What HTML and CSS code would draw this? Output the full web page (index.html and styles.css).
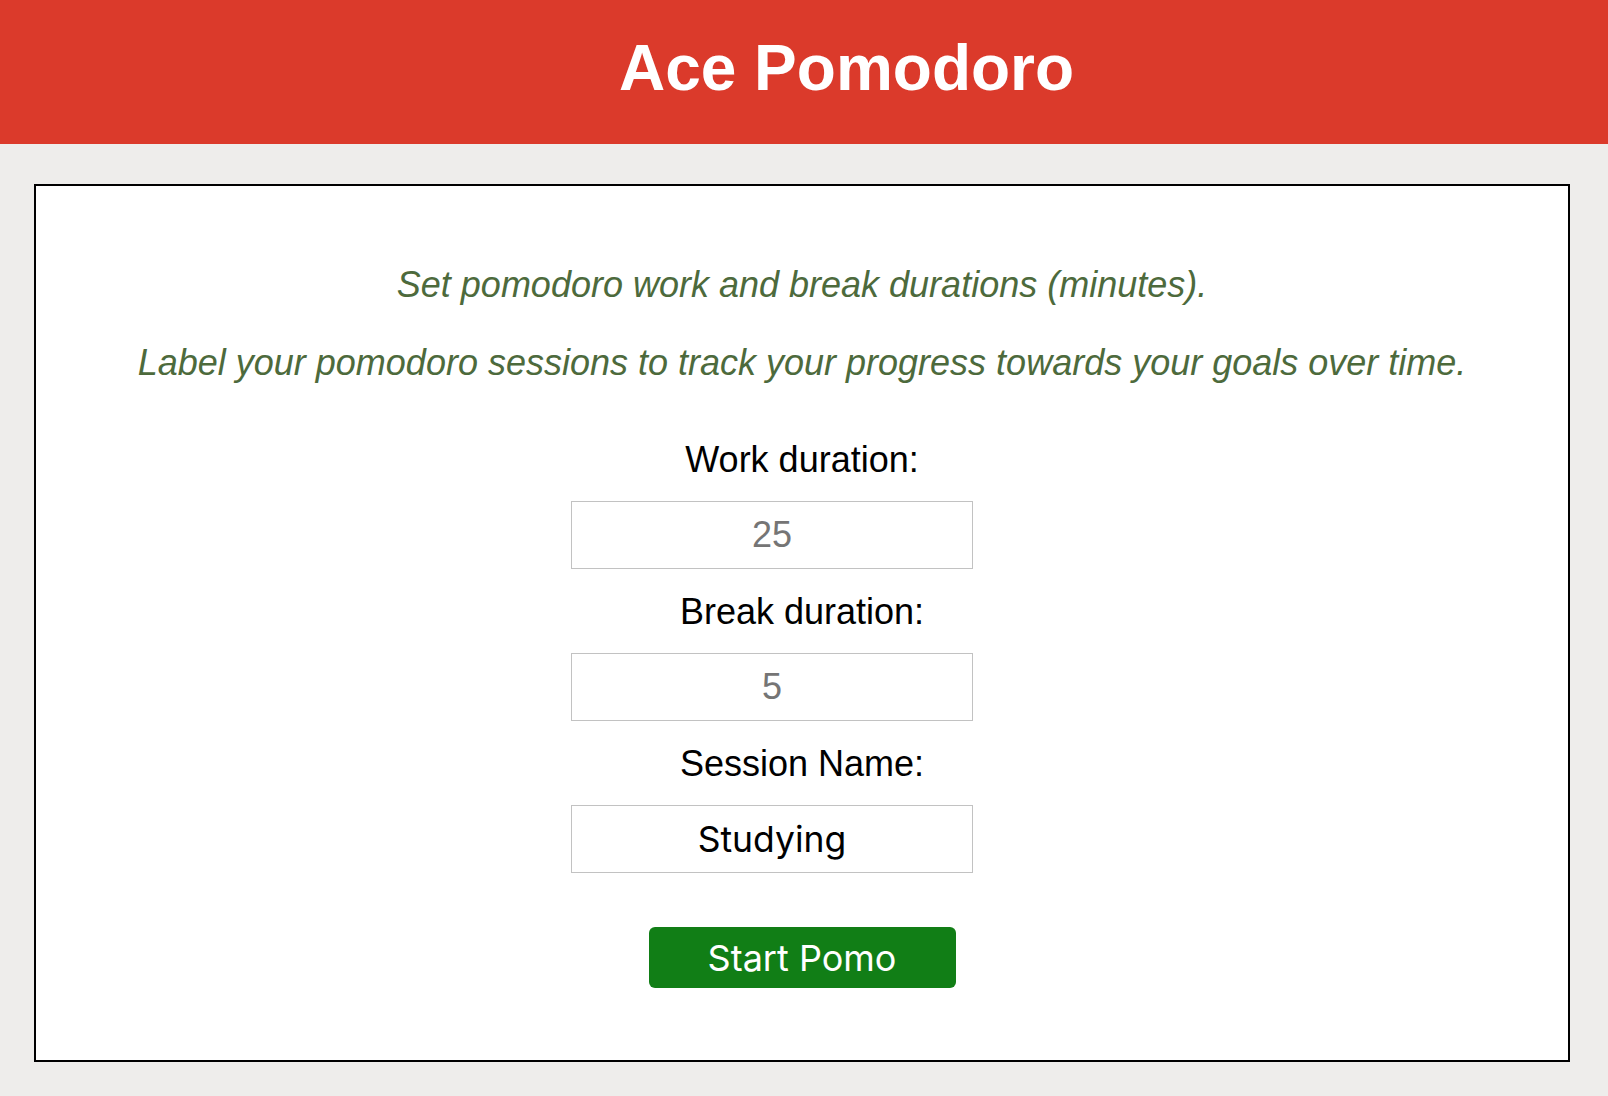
FILE: index.html
```html
<!DOCTYPE html>
<html>
<head>
<meta charset="utf-8">
<title>Ace Pomodoro</title>
<link rel="stylesheet" href="styles.css">
</head>
<body>
<header class="topbar">
  <h1 class="title">Ace Pomodoro</h1>
</header>
<main class="panel">
  <p class="intro">Set pomodoro work and break durations (minutes).</p>
  <p class="intro second">Label your pomodoro sessions to track your progress towards your goals over time.</p>
  <form class="form">
    <label class="label" for="work">Work duration:</label>
    <input class="field num" id="work" type="text" value="25">
    <label class="label" for="brk">Break duration:</label>
    <input class="field num" id="brk" type="text" value="5">
    <label class="label" for="name">Session Name:</label>
    <input class="field txt" id="name" type="text" value="Studying">
    <button class="start" type="button">Start Pomo</button>
  </form>
</main>
</body>
</html>
```

FILE: styles.css
```css
html, body {
  margin: 0;
  padding: 0;
}
body {
  background: #eeedeb;
  font-family: "Liberation Sans", Arial, Helvetica, sans-serif;
  min-height: 1096px;
}
.topbar {
  background: #db3a2b;
  height: 144px;
  box-sizing: border-box;
  padding: 36px 0 0 85px;
  text-align: center;
}
.title {
  margin: 0;
  color: #ffffff;
  font-size: 64px;
  line-height: 64px;
  font-weight: bold;
}
.panel {
  margin: 40px 38px 0 34px;
  background: #ffffff;
  border: 2px solid #000000;
  padding: 78px 0 72px;
  text-align: center;
}
.intro {
  margin: 0;
  font-style: italic;
  font-size: 36px;
  line-height: 41px;
  color: #4d6a3c;
}
.intro.second {
  margin-top: 37px;
}
.form {
  margin-top: 56px;
  display: flex;
  flex-direction: column;
  align-items: center;
}
.label {
  display: block;
  font-size: 36px;
  line-height: 41px;
  color: #000000;
  margin-bottom: 21px;
}
.field {
  box-sizing: border-box;
  width: 402px;
  height: 68px;
  margin: 0 60px 22px 0;
  border: 1px solid #c2c2c2;
  background: #ffffff;
  text-align: center;
  padding: 0;
  outline: none;
}
.field.num {
  font-family: "Liberation Sans", Arial, sans-serif;
  font-size: 36px;
  color: #757575;
}
.field.txt {
  font-family: Inter, "Liberation Sans", sans-serif;
  font-size: 35.5px;
  color: #000000;
}
.start {
  margin-top: 32px;
  width: 307px;
  height: 61px;
  border: none;
  border-radius: 6px;
  background: #117e16;
  color: #ffffff;
  font-family: Inter, "Liberation Sans", sans-serif;
  font-size: 36px;
  padding: 0;
}
```
